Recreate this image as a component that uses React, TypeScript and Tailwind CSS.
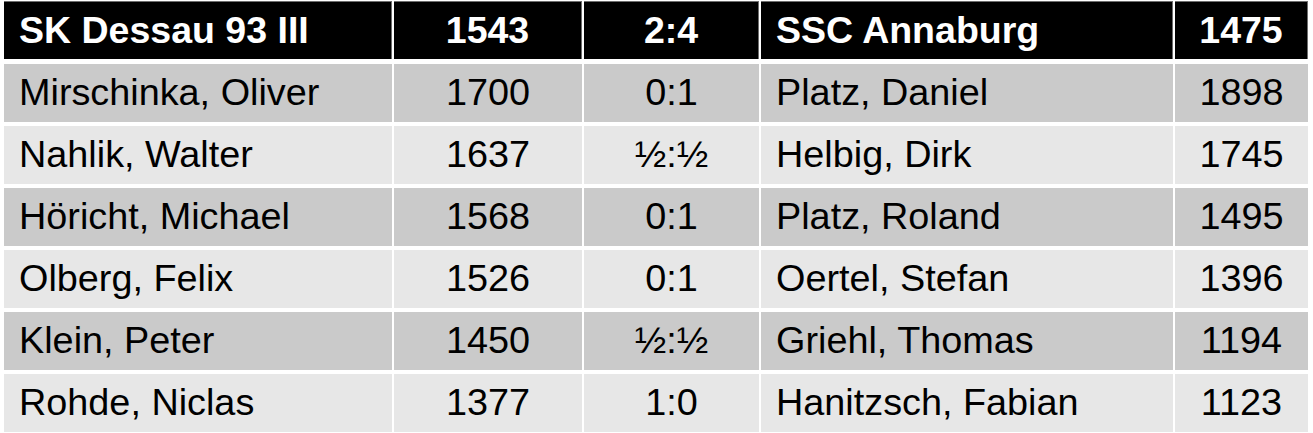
import React from "react";

const rows: [string, string, string, string, string][] = [
  ["Mirschinka, Oliver", "1700", "0:1", "Platz, Daniel", "1898"],
  ["Nahlik, Walter", "1637", "½:½", "Helbig, Dirk", "1745"],
  ["Höricht, Michael", "1568", "0:1", "Platz, Roland", "1495"],
  ["Olberg, Felix", "1526", "0:1", "Oertel, Stefan", "1396"],
  ["Klein, Peter", "1450", "½:½", "Griehl, Thomas", "1194"],
  ["Rohde, Niclas", "1377", "1:0", "Hanitzsch, Fabian", "1123"],
];

export default function App() {
  return (
    <div
      className="w-[1313px] h-[433px] bg-white pl-[4px] pt-[1px] overflow-hidden leading-none text-black"
      style={{ fontFamily: '"Liberation Sans", Arial, sans-serif' }}
    >
      <div className="grid grid-cols-[388px_188px_175px_412px_133px] gap-x-[2px] w-fit text-[37.5px] font-bold text-white">
        <div className="h-[58px] bg-black flex items-center pl-[15px] border-t border-r border-[#6e6e6e]">SK Dessau 93 III</div>
        <div className="h-[58px] bg-black flex items-center justify-center border-t border-r border-[#6e6e6e]">1543</div>
        <div className="h-[58px] bg-black flex items-center justify-center border-t border-r border-[#6e6e6e]">2:4</div>
        <div className="h-[58px] bg-black flex items-center pl-[15px] border-t border-r border-[#6e6e6e]">SSC Annaburg</div>
        <div className="h-[58px] bg-black flex items-center justify-center border-t border-r border-[#6e6e6e]">1475</div>
      </div>
      <div className="flex flex-col gap-y-[4px] mt-[5px] text-[37.8px]">
        {rows.map((r, i) => {
          const bg = i % 2 === 0 ? "bg-[#cacaca]" : "bg-[#e7e7e7]";
          return (
            <div key={i} className="grid grid-cols-[388px_188px_175px_412px_133px] gap-x-[2px] w-fit">
              <div className={`h-[58px] ${bg} flex items-center pl-[15px]`}>{r[0]}</div>
              <div className={`h-[58px] ${bg} flex items-center justify-center`}>{r[1]}</div>
              <div className={`h-[58px] ${bg} flex items-center justify-center`}>{r[2]}</div>
              <div className={`h-[58px] ${bg} flex items-center pl-[15px]`}>{r[3]}</div>
              <div className={`h-[58px] ${bg} flex items-center justify-center`}>{r[4]}</div>
            </div>
          );
        })}
      </div>
    </div>
  );
}
